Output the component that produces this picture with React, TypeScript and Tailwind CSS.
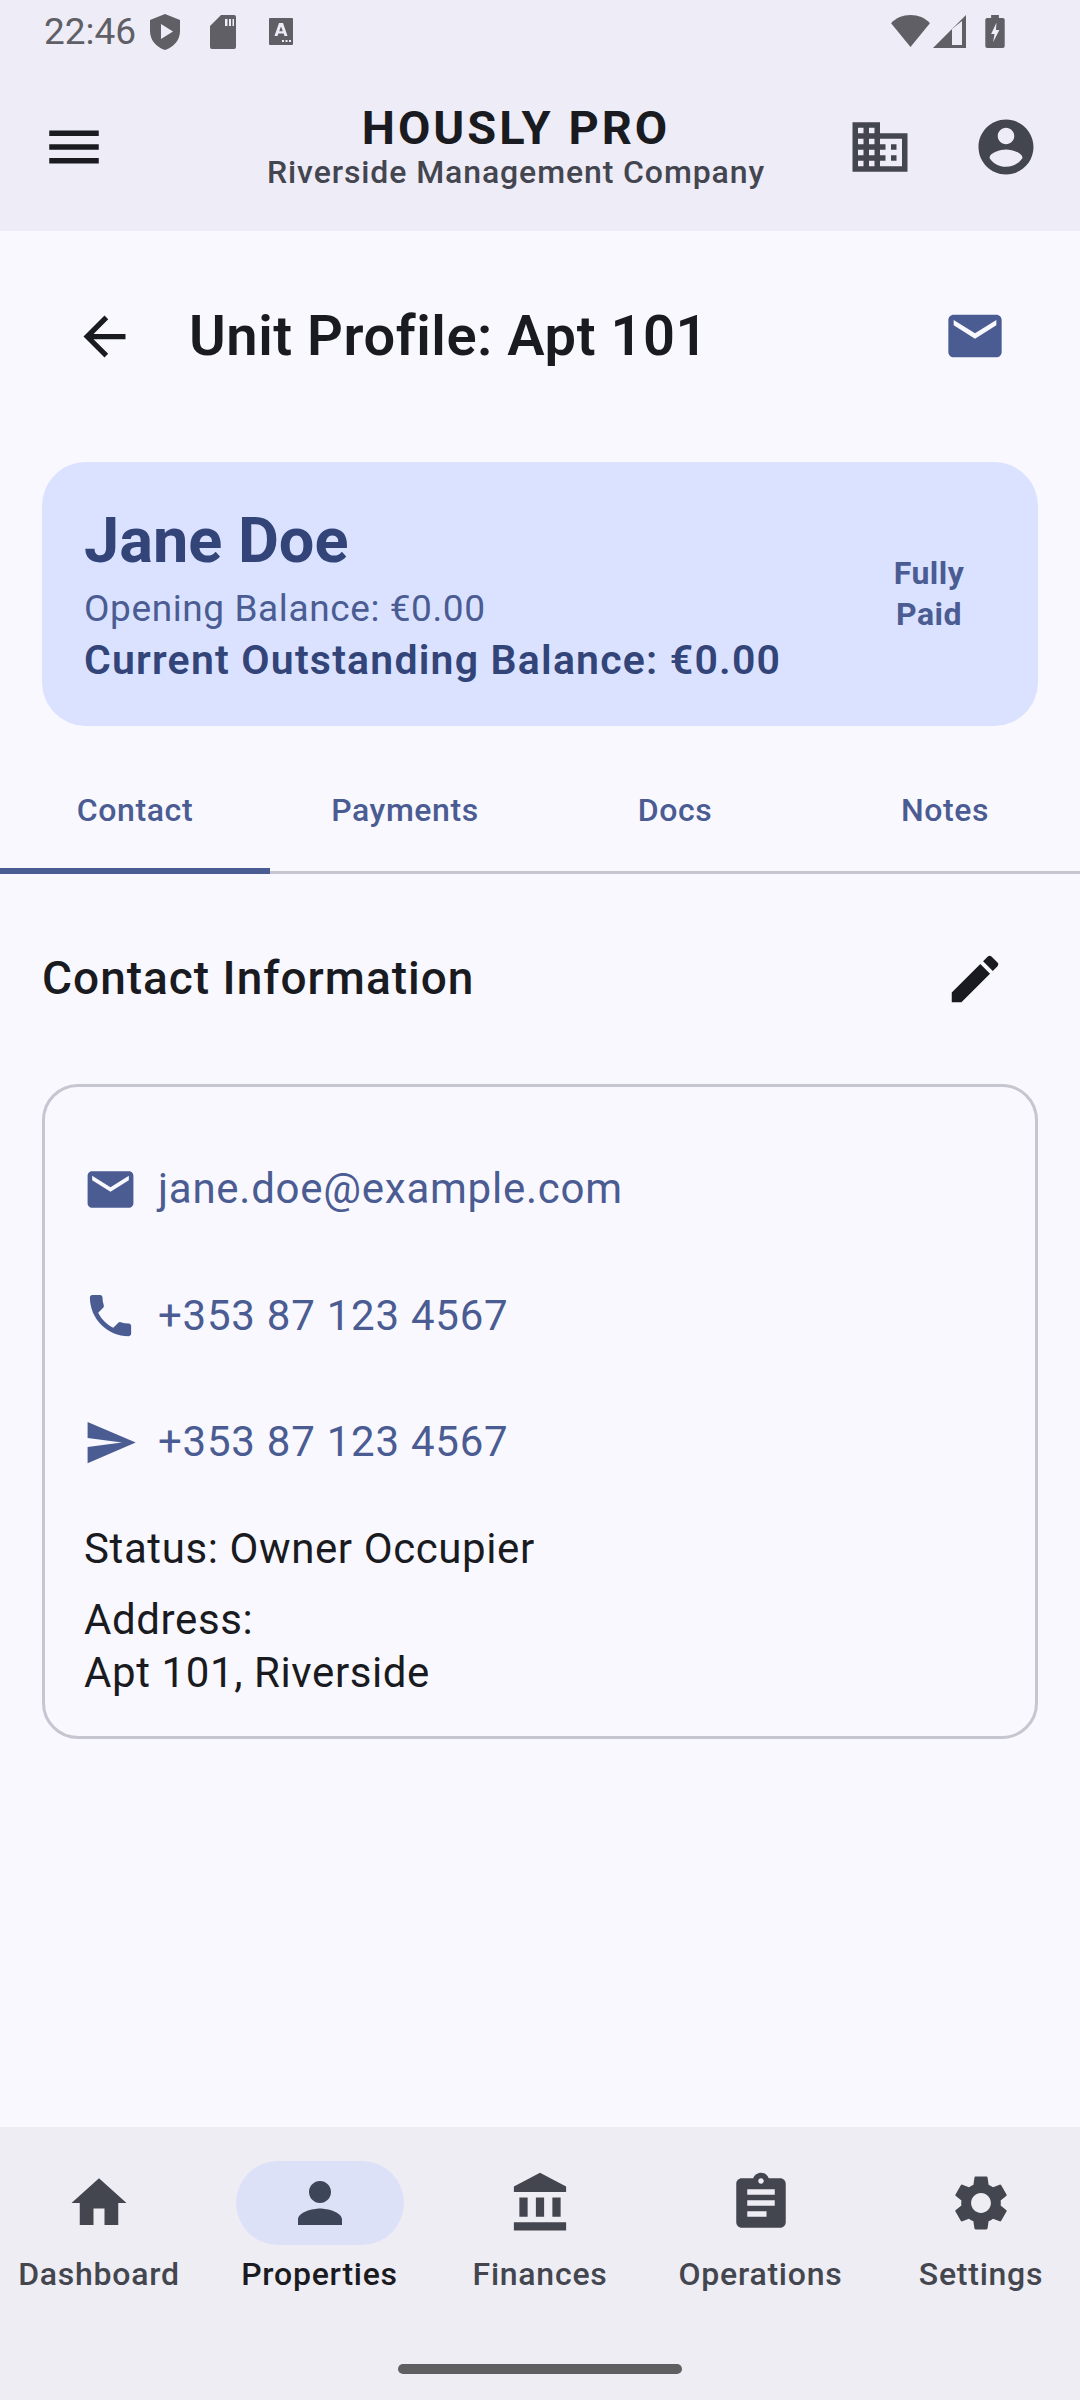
const paths = {
  menu: "M3 18h18v-2H3v2zm0-5h18v-2H3v2zm0-7v2h18V6H3z",
  domain:
    "M12 7V3H2v18h20V7H12zM6 19H4v-2h2v2zm0-4H4v-2h2v2zm0-4H4V9h2v2zm0-4H4V5h2v2zm4 12H8v-2h2v2zm0-4H8v-2h2v2zm0-4H8V9h2v2zm0-4H8V5h2v2zm10 12h-8v-2h2v-2h-2v-2h2v-2h-2V9h8v10zm-2-8h-2v2h2v-2zm0 4h-2v2h2v-2z",
  account:
    "M12 2C6.48 2 2 6.48 2 12s4.48 10 10 10 10-4.48 10-10S17.52 2 12 2zm0 3c1.66 0 3 1.34 3 3s-1.34 3-3 3-3-1.34-3-3 1.34-3 3-3zm0 14.2c-2.5 0-4.71-1.28-6-3.22.03-1.99 4-3.08 6-3.08 1.99 0 5.97 1.09 6 3.08-1.29 1.94-3.5 3.22-6 3.22z",
  back: "M20 11H7.83l5.59-5.59L12 4l-8 8 8 8 1.41-1.41L7.83 13H20v-2z",
  email:
    "M20 4H4c-1.1 0-1.99.9-1.99 2L2 18c0 1.1.9 2 2 2h16c1.1 0 2-.9 2-2V6c0-1.1-.9-2-2-2zm0 4l-8 5-8-5V6l8 5 8-5v2z",
  edit: "M3 17.25V21h3.75L17.81 9.94l-3.75-3.75L3 17.25zM20.71 7.04c.39-.39.39-1.02 0-1.41l-2.34-2.34c-.39-.39-1.02-.39-1.41 0l-1.83 1.83 3.75 3.75 1.83-1.83z",
  phone:
    "M6.62 10.79c1.44 2.83 3.76 5.14 6.59 6.59l2.2-2.2c.27-.27.67-.36 1.02-.24 1.12.37 2.33.57 3.57.57.55 0 1 .45 1 1V20c0 .55-.45 1-1 1-9.39 0-17-7.61-17-17 0-.55.45-1 1-1h3.5c.55 0 1 .45 1 1 0 1.25.2 2.45.57 3.57.11.35.03.74-.25 1.02l-2.2 2.2z",
  send: "M2.01 21L23 12 2.01 3 2 10l15 2-15 2z",
  home: "M10 20v-6h4v6h5v-8h3L12 3 2 12h3v8z",
  person:
    "M12 12c2.21 0 4-1.79 4-4s-1.79-4-4-4-4 1.79-4 4 1.79 4 4 4zm0 2c-2.67 0-8 1.34-8 4v2h16v-2c0-2.66-5.33-4-8-4z",
  bank: "M4.5 10v7h3v-7h-3zm6 0v7h3v-7h-3zM2.5 22h19v-3h-19v3zm14-12v7h3v-7h-3zm-4.5-9L2.5 6v2h19V6l-9.5-5z",
  assignment:
    "M19 3h-4.18C14.4 1.84 13.3 1 12 1c-1.3 0-2.4.84-2.82 2H5c-1.1 0-2 .9-2 2v14c0 1.1.9 2 2 2h14c1.1 0 2-.9 2-2V5c0-1.1-.9-2-2-2zm-7 0c.55 0 1 .45 1 1s-.45 1-1 1-1-.45-1-1 .45-1 1-1zm2 14H7v-2h7v2zm3-4H7v-2h10v2zm0-4H7V7h10v2z",
  settings:
    "M19.14 12.94c.04-.3.06-.61.06-.94 0-.32-.02-.64-.07-.94l2.03-1.58c.18-.14.23-.41.12-.61l-1.92-3.32c-.12-.22-.37-.29-.59-.22l-2.39.96c-.5-.38-1.03-.7-1.62-.94l-.36-2.54c-.04-.24-.24-.41-.48-.41h-3.84c-.24 0-.43.17-.47.41l-.36 2.54c-.59.24-1.13.57-1.62.94l-2.39-.96c-.22-.08-.47 0-.59.22L2.74 8.87c-.12.21-.08.47.12.61l2.03 1.58c-.05.3-.09.63-.09.94s.02.64.07.94l-2.03 1.58c-.18.14-.23.41-.12.61l1.92 3.32c.12.22.37.29.59.22l2.39-.96c.5.38 1.03.7 1.62.94l.36 2.54c.05.24.24.41.48.41h3.84c.24 0 .44-.17.47-.41l.36-2.54c.59-.24 1.13-.56 1.62-.94l2.39.96c.22.08.47 0 .59-.22l1.92-3.32c.12-.22.07-.47-.12-.61l-2.01-1.58zM12 15.6c-1.98 0-3.6-1.62-3.6-3.6s1.62-3.6 3.6-3.6 3.6 1.62 3.6 3.6-1.62 3.6-3.6 3.6z",
};

function Icon({ name, className }: { name: keyof typeof paths; className: string }) {
  return (
    <svg viewBox="0 0 24 24" fill="currentColor" className={className}>
      <path d={paths[name]} />
    </svg>
  );
}

function StatusBar() {
  return (
    <div className="flex h-[63px] items-center justify-between pl-[44px] pr-[75px] text-[#5f5f65]">
      <div className="flex items-center">
        <span className="text-[37px] leading-none">22:46</span>
        <svg viewBox="0 0 30 36" fill="currentColor" className="ml-[14px] h-[36px] w-[30px]">
          <path fillRule="evenodd" d="M15 0 30 6v11c0 9-6 16-15 19C6 33 0 26 0 17V6zM11 10v15l12-7.500z" />
        </svg>
        <svg viewBox="0 0 26 34" fill="currentColor" className="ml-[30px] h-[34px] w-[26px]">
          <path
            fillRule="evenodd"
            d="M11 0h13a2 2 0 0 1 2 2v30a2 2 0 0 1-2 2H2a2 2 0 0 1-2-2V11zM15 4v7h2.500V4zM19 4v7h2V4zM22.500 4v7H24V4z"
          />
        </svg>
        <svg viewBox="0 0 24 27" fill="currentColor" className="ml-[33px] h-[27px] w-[24px]">
          <path
            fillRule="evenodd"
            d="M1 0h22a1 1 0 0 1 1 1v25a1 1 0 0 1-1 1H1a1 1 0 0 1-1-1V1a1 1 0 0 1 1-1zM10 5 5.500 18h3l.8-2.500h5.400l.8 2.500h3L14 5zM12 8.500l1.800 4.800h-3.600zM13 22v2h2v-2zM16.500 22v2h2v-2zM20 22v2h2v-2z"
          />
        </svg>
      </div>
      <div className="flex items-center">
        <svg viewBox="0 0 40 34" fill="currentColor" className="h-[33px] w-[39px]">
          <path d="M0 8.500C5 3 12 0 20 0s15 3 20 8.500L20 33z" />
        </svg>
        <svg viewBox="0 0 33 33" className="ml-[3px] h-[33px] w-[33px]">
          <path fill="currentColor" d="M33 0v33H0z" />
          <path fill="#eeecf7" d="M19 14 29 6v24H19z" />
        </svg>
        <svg viewBox="0 0 20 34" fill="currentColor" className="ml-[19px] h-[33px] w-[20px]">
          <path
            fillRule="evenodd"
            d="M6 0h8v3h4a2 2 0 0 1 2 2v27a2 2 0 0 1-2 2H2a2 2 0 0 1-2-2V5a2 2 0 0 1 2-2h4zM11.500 8 6 19.500h3.500L8 28l6.500-12.500H11z"
          />
        </svg>
      </div>
    </div>
  );
}

function TopBar() {
  return (
    <div className="flex h-[168px] items-center pr-[41px] pb-[1px]">
      <Icon name="menu" className="ml-[41px] h-[66px] w-[66px] text-[#1a1b21]" />
      <div className="flex flex-1 flex-col items-center pl-[78px]">
        <span className="text-[47px] leading-[52px] font-bold tracking-[3px] text-[#1a1b21]">HOUSLY PRO</span>
        <span className="text-[32px] leading-[37px] font-medium tracking-[0.9px] text-[#44464f]">
          Riverside Management Company
        </span>
      </div>
      <Icon name="domain" className="h-[66px] w-[66px] text-[#44464f]" />
      <Icon name="account" className="ml-[60px] h-[66px] w-[66px] text-[#44464f]" />
    </div>
  );
}

function ContactRow({ icon, text }: { icon: keyof typeof paths; text: string }) {
  return (
    <div className="flex h-[66px] items-center">
      <Icon name={icon} className="ml-[-1px] h-[55px] w-[55px] text-[#4a5c92]" />
      <span className="ml-[20px] text-[42px] leading-none tracking-[0.75px] text-[#4a5c92]">{text}</span>
    </div>
  );
}

const tabs = ["Contact", "Payments", "Docs", "Notes"];
const navItems: { icon: keyof typeof paths; label: string; active?: boolean }[] = [
  { icon: "home", label: "Dashboard" },
  { icon: "person", label: "Properties", active: true },
  { icon: "bank", label: "Finances" },
  { icon: "assignment", label: "Operations" },
  { icon: "settings", label: "Settings" },
];

export default function App() {
  return (
    <div className="flex h-[2400px] w-[1080px] flex-col overflow-hidden bg-[#f9f8ff] font-['Roboto',sans-serif]">
      <header className="h-[231px] bg-[#eeecf7]">
        <StatusBar />
        <TopBar />
      </header>

      <main className="flex-1">
        <div className="flex h-[208px] items-center pt-[2px]">
          <Icon name="back" className="ml-[73px] h-[63px] w-[63px] text-[#1a1b21]" />
          <h1 className="ml-[53px] flex-1 text-[56px] leading-none font-semibold tracking-[0.55px] text-[#1a1b21]">
            Unit Profile: Apt 101
          </h1>
          <Icon name="email" className="mr-[73px] h-[64px] w-[64px] text-[#4a5c92]" />
        </div>

        <section className="mx-[42px] mt-[23px] flex h-[264px] items-center justify-between rounded-[44px] bg-[#dae2ff] pl-[42px] pr-[69px]">
          <div className="flex flex-col pt-[2px]">
            <span className="text-[63px] leading-[72px] font-bold text-[#324478]">Jane Doe</span>
            <span className="mt-[7px] text-[37px] leading-[50px] tracking-[0.6px] text-[#4a5c92]">
              Opening Balance: €0.00
            </span>
            <span className="pt-[1px] text-[41px] leading-[50px] font-semibold tracking-[1.2px] text-[#324478]">
              Current Outstanding Balance: €0.00
            </span>
          </div>
          <span className="w-[80px] text-center text-[32px] leading-[41px] font-bold tracking-[0.5px] text-[#4a5c92]">
            Fully Paid
          </span>
        </section>

        <nav className="relative flex h-[148px] border-b-[3px] border-[#c5c6d0]">
          {tabs.map((tab) => (
            <div
              key={tab}
              className="flex h-full w-[270px] items-center justify-center pt-[22px] text-[32px] font-medium tracking-[0.6px] text-[#4a5c92]"
            >
              {tab}
            </div>
          ))}
          <div className="absolute bottom-[-3px] left-0 h-[6px] w-[270px] bg-[#4a5c92]" />
        </nav>

        <div className="flex h-[210px] items-center justify-between px-[42px]">
          <h2 className="pb-[2px] text-[46px] leading-none font-medium tracking-[1px] text-[#1a1b21]">
            Contact Information
          </h2>
          <Icon name="edit" className="mr-[32px] h-[62px] w-[62px] text-[#1a1b21]" />
        </div>

        <section className="mx-[42px] h-[655px] rounded-[36px] border-[3px] border-[#c5c6d0] pl-[39px] pt-[69px]">
          <div className="flex flex-col gap-[60.5px]">
            <ContactRow icon="email" text="jane.doe@example.com" />
            <ContactRow icon="phone" text="+353 87 123 4567" />
            <ContactRow icon="send" text="+353 87 123 4567" />
          </div>
          <p className="mt-[47px] text-[42px] leading-[54px] tracking-[0.6px] text-[#1a1b21]">Status: Owner Occupier</p>
          <p className="mt-[17px] text-[42px] leading-[53px] tracking-[0.6px] text-[#1a1b21]">
            Address:
            <br />
            Apt 101, Riverside
          </p>
        </section>
      </main>

      <footer className="flex h-[273px] flex-col bg-[#eeedf4]">
        <div className="mt-[34px] flex justify-between">
          {navItems.map((item) => (
            <div key={item.label} className="flex w-[198px] flex-col items-center">
              <div
                className={`flex h-[84px] w-[168px] items-center justify-center rounded-full ${
                  item.active ? "bg-[#dde1f8] text-[#3d4559]" : "text-[#44464f]"
                }`}
              >
                <Icon name={item.icon} className="h-[66px] w-[66px]" />
              </div>
              <span
                className={`mt-[10px] text-[32px] leading-[38px] font-medium tracking-[0.75px] whitespace-nowrap ${
                  item.active ? "text-[#1a1b21]" : "text-[#44464f]"
                }`}
              >
                {item.label}
              </span>
            </div>
          ))}
        </div>
        <div className="mx-auto mt-[71px] h-[10px] w-[284px] rounded-full bg-[#5f5f62]" />
      </footer>
    </div>
  );
}
